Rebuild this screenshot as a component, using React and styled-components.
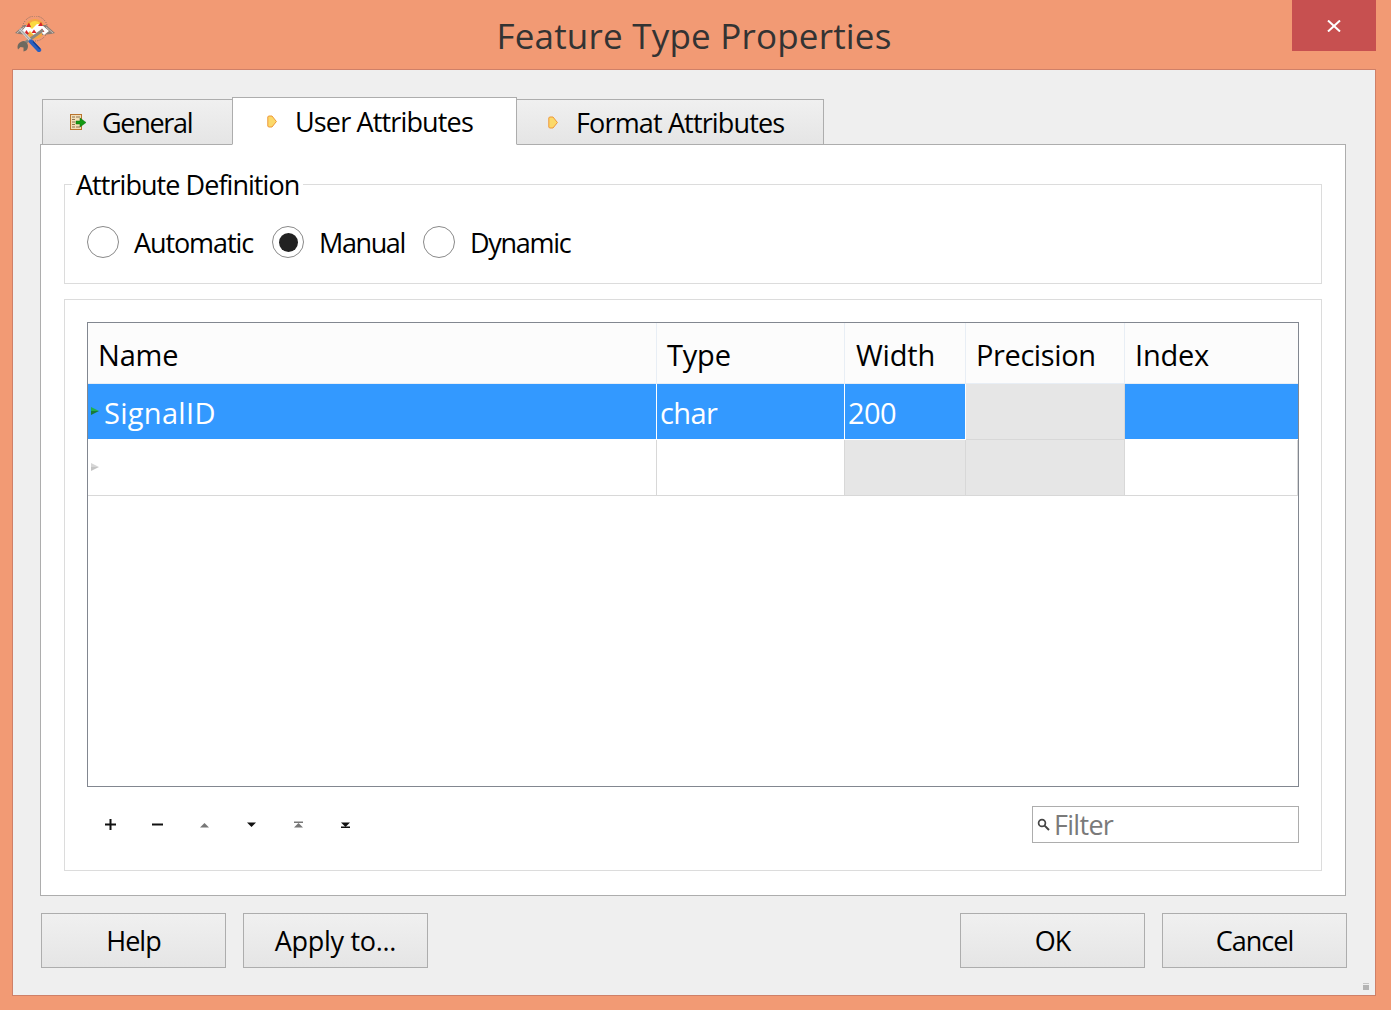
import React from "react"
import styled, { createGlobalStyle } from "styled-components"

const Global = createGlobalStyle`
  html, body { margin: 0; padding: 0; background: #F29A74; }
  body { font-family: "Open Sans", "Liberation Sans", sans-serif; color: #000; }
`

const Window = styled.div`
  width: 1391px;
  height: 1010px;
  display: flex;
  flex-direction: column;
  background: #F29A74;
  overflow: hidden;
`

const TitleBar = styled.div`
  height: 69px;
  flex: none;
  display: flex;
  align-items: flex-start;
  padding: 0 15px;
`

const Logo = styled.svg`
  width: 40px;
  height: 36px;
  margin-top: 16px;
  flex: none;
`

const Title = styled.div`
  flex: 1;
  text-align: center;
  font-size: 35px;
  line-height: 72px;
  letter-spacing: 0.2px;
  color: #333;
  margin-left: 41px;
`

const CloseButton = styled.div`
  width: 84px;
  height: 51px;
  flex: none;
  background: #C75050;
  display: flex;
  align-items: center;
  justify-content: center;
`

const Client = styled.div`
  flex: 1;
  position: relative;
  margin: 0 15px 14px 12px;
  border: 1px solid #CF8068;
  background: #EFEFEF;
  padding: 27px 29px 27px 27px;
  display: flex;
  flex-direction: column;
`

const TabRow = styled.div`
  display: flex;
  align-items: flex-end;
  padding-left: 2px;
  height: 48px;
  flex: none;
  margin-bottom: -1px;
`

const Tab = styled.div`
  position: relative;
  z-index: ${p => (p.$active ? 2 : 1)};
  width: ${p => p.$width}px;
  height: ${p => (p.$active ? 48 : 46)}px;
  margin-left: ${p => (p.$first ? 0 : -1)}px;
  box-sizing: border-box;
  border: 1px solid #ADADAD;
  border-bottom: ${p => (p.$active ? "1px solid #fff" : "1px solid #ADADAD")};
  background: ${p => (p.$active ? "#fff" : "linear-gradient(#F0F0F0, #E5E5E5)")};
  padding-left: ${p => p.$inset}px;
  display: flex;
  align-items: center;
  gap: ${p => p.$gap}px;
  font-size: 27px;
  letter-spacing: ${p => p.$tracking ?? -0.85}px;
`

const Panel = styled.div`
  flex: none;
  height: 752px;
  box-sizing: border-box;
  border: 1px solid #ADADAD;
  background: #fff;
  padding: 21px 23px 24px 23px;
  display: flex;
  flex-direction: column;
  gap: 15px;
`

const DefinitionGroup = styled.fieldset`
  margin: 0;
  min-width: 0;
  flex: none;
  height: 118px;
  box-sizing: border-box;
  border: 1px solid #DCDCDC;
  padding: 24px 22px 0 22px;
`

const Legend = styled.legend`
  margin-left: -15px;
  padding: 2px 4px 0;
  font-size: 27px;
  line-height: 34px;
  letter-spacing: -0.95px;
`

const RadioRow = styled.div`
  display: flex;
  align-items: center;
  height: 32px;
`

const RadioItem = styled.label`
  display: flex;
  align-items: center;
  gap: 15px;
  width: ${p => p.$width}px;
  font-size: 27px;
  letter-spacing: ${p => p.$tracking}px;
`

const RadioMark = styled.span`
  width: 32px;
  height: 32px;
  box-sizing: border-box;
  flex: none;
  border: 1px solid #8A8A8A;
  border-radius: 50%;
  display: flex;
  align-items: center;
  justify-content: center;
  &::after {
    content: "";
    display: ${p => (p.$checked ? "block" : "none")};
    width: 19px;
    height: 19px;
    border-radius: 50%;
    background: #222;
  }
`

const TableGroup = styled.div`
  flex: 1;
  min-height: 0;
  border: 1px solid #DCDCDC;
  padding: 22px 22px 27px 22px;
  display: flex;
  flex-direction: column;
`

const Table = styled.div`
  flex: none;
  height: 465px;
  box-sizing: border-box;
  border: 1px solid #828790;
  background: #fff;
`

const Row = styled.div`
  display: grid;
  grid-template-columns: 569px 188px 121px 159px 1fr;
  height: ${p => p.$height}px;
`

const HeadCell = styled.div`
  box-sizing: border-box;
  background: #FCFCFC;
  border-right: 1px solid #E8EEF5;
  border-bottom: 1px solid #E8EEF5;
  padding: 2px 0 0 ${p => p.$pad}px;
  display: flex;
  align-items: center;
  font-size: 29px;
  letter-spacing: ${p => p.$tracking ?? -0.2}px;
  &:last-child { border-right: none; }
`

const Cell = styled.div`
  box-sizing: border-box;
  padding: 2px 0 0 3px;
  display: flex;
  align-items: center;
  font-size: 29px;
  letter-spacing: -0.6px;
  color: ${p => (p.$selected ? "#fff" : "#000")};
  background: ${p => (p.$disabled ? "#E6E6E6" : p.$selected ? "#3399FF" : "#fff")};
  border-right: 1px solid ${p => (p.$selected ? "#fff" : "#D8D8D8")};
  border-bottom: 1px solid ${p => (p.$selected ? "#fff" : "#D8D8D8")};
  &:last-child { border-right: ${p => (p.$selected ? "none" : "1px solid #D8D8D8")}; }
`

const NameCell = styled(Cell)`
  gap: 5px;
  letter-spacing: 0.3px;
`

const ArrowMark = styled.svg`
  width: 8px;
  height: 8px;
  flex: none;
  margin-top: -4px;
`

const Toolbar = styled.div`
  flex: none;
  display: flex;
  align-items: center;
  margin-top: 19px;
  height: 37px;
`

const ToolButton = styled.div`
  width: 47px;
  height: 37px;
  flex: none;
  display: flex;
  align-items: center;
  justify-content: center;
`

const FilterBox = styled.div`
  margin-left: auto;
  width: 267px;
  height: 37px;
  box-sizing: border-box;
  background: #fff;
  border: 1px solid #ADADAD;
  display: flex;
  align-items: center;
  gap: 4px;
  padding-left: 4px;
  font-size: 27px;
  letter-spacing: -0.7px;
  color: #7A7A7A;
`

const ButtonRow = styled.div`
  flex: none;
  display: flex;
  gap: 17px;
  margin: 17px -1px 0 1px;
`

const Button = styled.div`
  width: 185px;
  height: 55px;
  box-sizing: border-box;
  border: 1px solid #ADADAD;
  background: linear-gradient(#F0F0F0, #E5E5E5);
  display: flex;
  align-items: center;
  justify-content: center;
  font-size: 27px;
  letter-spacing: ${p => p.$tracking ?? -1}px;
  ${p => p.$pushRight && "margin-left: auto;"}
`

const SizeGrip = styled.div`
  position: absolute;
  right: 6px;
  bottom: 5px;
  width: 6px;
  height: 7px;
  border-top: 1px solid #C4C4C4;
  box-sizing: border-box;
  &::after {
    content: "";
    display: block;
    margin-top: 1px;
    height: 5px;
    background: #B4B4B4;
  }
`

const CloseIcon = () => (
  <svg width="14" height="12" viewBox="0 0 14 12">
    <path d="M1 0.5 L13 11.5 M13 0.5 L1 11.5" stroke="#fff" strokeWidth="2" fill="none" />
  </svg>
)

const AppLogo = () => (
  <Logo viewBox="0 0 40 36">
    <circle cx="20" cy="12.5" r="12.5" fill="none" stroke="#7A6A62" strokeWidth="0.9" strokeDasharray="1 1.3" />
    <circle cx="20" cy="13" r="10" fill="#F5A742" />
    <circle cx="20" cy="12" r="7" fill="#FBD93F" />
    <path d="M0 17 L9 9 L14 9 L13 19 L4 18 Z M40 17 L31 9 L26 9 L27 19 L36 18 Z" fill="#8A7D75" />
    <path d="M2 17 L9 11 M38 17 L31 11" stroke="#C9BFB6" strokeWidth="1" fill="none" />
    <path d="M6 16 L12 9 L17 13 L22 8 L27 9 L34 15 L29 19 L25 15 L20 20 L15 15 L11 19 Z" fill="#fff" />
    <path d="M11 11 L14 6.5 L16 11 Z M23 10 L26 6 L28 10 Z M9 18 L11.5 14 L14 18 Z M16.5 17 L19 13.5 L21.5 17 Z M24 16 L27 12.5 L29.5 16 Z" fill="#D8262C" />
    <path d="M7 29 L28 14" stroke="#8B8880" strokeWidth="3" fill="none" />
    <path d="M9 25 C4 25.5 1.5 29 3 33.5 L5.5 31 L8.5 31.5 L8.5 35.5 C13 35 14 30 12 27 Z" fill="#6E695F" />
    <path d="M5 13 L16 25" stroke="#D2D2D2" strokeWidth="2.6" fill="none" />
    <path d="M5 13 L16 25" stroke="#777" strokeWidth="0.6" fill="none" />
    <path d="M16 25.5 L24 34" stroke="#2A5FC0" strokeWidth="4.4" strokeLinecap="round" fill="none" />
    <path d="M18 25.5 L25 33" stroke="#133E91" strokeWidth="1.2" fill="none" />
  </Logo>
)

const GeneralIcon = () => (
  <svg width="16" height="16" viewBox="0 0 16 16">
    <rect x="0.5" y="0.5" width="11" height="15" fill="#F3DFB8" stroke="#B9742E" />
    <path d="M2 3 H5 M6 3 H10 M2 5.5 H5 M2 8 H5 M2 10.5 H5 M2 13 H5 M6 13 H10" stroke="#8E7450" strokeWidth="1.2" />
    <path d="M6 7 H10 V4 L16 8.5 L10 13 V10 H6 Z" fill="#149A14" stroke="#0B6E0B" strokeWidth="0.5" />
  </svg>
)

const DiamondIcon = () => (
  <svg width="10" height="13" viewBox="0 0 10 13">
    <path d="M1.5 1 H5 L9.4 6.5 L5 12 H1.5 L0.8 11 V2 Z" fill="#FBD96A" stroke="#EE9838" strokeWidth="1" />
  </svg>
)

const RowArrow = ({ color, shade }) => (
  <ArrowMark viewBox="0 0 8 8">
    <path d="M0 0 L8 4 L0 4 Z" fill={color} />
    <path d="M0 4 L8 4 L0 8 Z" fill={shade} />
  </ArrowMark>
)

const PlusIcon = () => (
  <svg width="11" height="11" viewBox="0 0 11 11">
    <path d="M0 4.5 H11 V6.5 H0 Z M4.5 0 H6.5 V11 H4.5 Z" fill="#111" />
  </svg>
)

const MinusIcon = () => (
  <svg width="11" height="11" viewBox="0 0 11 11">
    <path d="M0 4.5 H11 V6.5 H0 Z" fill="#111" />
  </svg>
)

const ArrowIcon = ({ down, bar, color }) => (
  <svg width="9" height="9" viewBox="0 0 9 9">
    {bar && <path d={down ? "M0 6.5 H9 V8 H0 Z" : "M0 1.5 H9 V3 H0 Z"} fill={color} />}
    <path d={down ? "M0 2.5 H9 L4.5 7 Z" : "M0 7.5 H9 L4.5 3 Z"} fill={color} />
  </svg>
)

const SearchIcon = () => (
  <svg width="13" height="13" viewBox="0 0 13 13">
    <circle cx="5" cy="5" r="3.4" fill="none" stroke="#444" strokeWidth="1.7" />
    <path d="M7.6 7.6 L12 12" stroke="#444" strokeWidth="2" />
  </svg>
)

export default function App() {
  return (
    <Window>
      <Global />
      <TitleBar>
        <AppLogo />
        <Title>Feature Type Properties</Title>
        <CloseButton><CloseIcon /></CloseButton>
      </TitleBar>
      <Client>
        <TabRow>
          <Tab $first $width={191} $inset={27} $gap={16} $tracking={-1.3}><GeneralIcon />General</Tab>
          <Tab $active $width={285} $inset={34} $gap={18}><DiamondIcon />User Attributes</Tab>
          <Tab $width={308} $inset={31} $gap={18}><DiamondIcon />Format Attributes</Tab>
        </TabRow>
        <Panel>
          <DefinitionGroup>
            <Legend>Attribute Definition</Legend>
            <RadioRow>
              <RadioItem $width={185} $tracking={-1.1}><RadioMark />Automatic</RadioItem>
              <RadioItem $width={151} $tracking={-1.4}><RadioMark $checked />Manual</RadioItem>
              <RadioItem $width={160} $tracking={-1.3}><RadioMark />Dynamic</RadioItem>
            </RadioRow>
          </DefinitionGroup>
          <TableGroup>
            <Table>
              <Row $height={61}>
                <HeadCell $pad={10}>Name</HeadCell>
                <HeadCell $pad={10}>Type</HeadCell>
                <HeadCell $pad={11}>Width</HeadCell>
                <HeadCell $pad={10} $tracking={-0.4}>Precision</HeadCell>
                <HeadCell $pad={10}>Index</HeadCell>
              </Row>
              <Row $height={56}>
                <NameCell $selected><RowArrow color="#22B14C" shade="#1A7A3A" />SignalID</NameCell>
                <Cell $selected>char</Cell>
                <Cell $selected>200</Cell>
                <Cell $disabled />
                <Cell $selected />
              </Row>
              <Row $height={56}>
                <NameCell><RowArrow color="#D6D6D6" shade="#C4C4C4" /></NameCell>
                <Cell />
                <Cell $disabled />
                <Cell $disabled />
                <Cell />
              </Row>
            </Table>
            <Toolbar>
              <ToolButton><PlusIcon /></ToolButton>
              <ToolButton><MinusIcon /></ToolButton>
              <ToolButton><ArrowIcon color="#777" /></ToolButton>
              <ToolButton><ArrowIcon down color="#111" /></ToolButton>
              <ToolButton><ArrowIcon bar color="#777" /></ToolButton>
              <ToolButton><ArrowIcon down bar color="#111" /></ToolButton>
              <FilterBox><SearchIcon />Filter</FilterBox>
            </Toolbar>
          </TableGroup>
        </Panel>
        <ButtonRow>
          <Button>Help</Button>
          <Button $tracking={-0.3}>Apply to...</Button>
          <Button $pushRight>OK</Button>
          <Button>Cancel</Button>
        </ButtonRow>
        <SizeGrip />
      </Client>
    </Window>
  )
}
